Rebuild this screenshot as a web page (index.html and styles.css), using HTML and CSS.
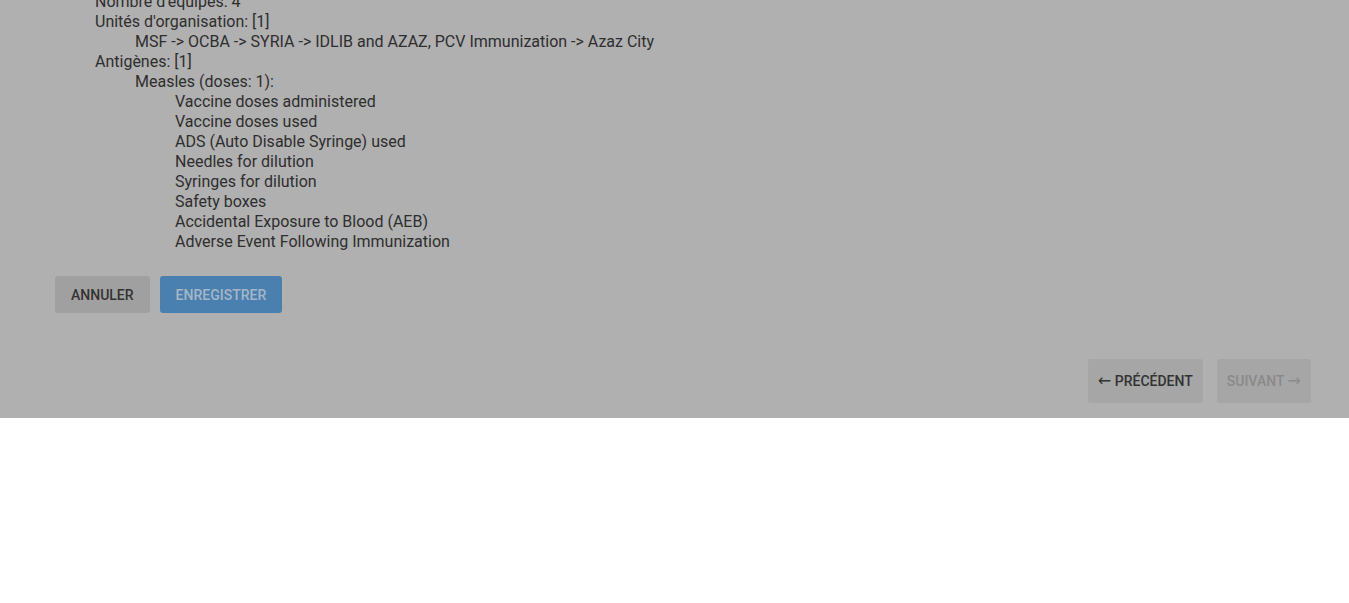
FILE: index.html
```html
<!DOCTYPE html>
<html lang="fr">
<head>
<meta charset="utf-8">
<link rel="stylesheet" href="styles.css">
</head>
<body>
<div class="screen">
  <div class="summary">
    <div class="line l1">Nombre d'équipes: 4</div>
    <div class="line l1">Unités d'organisation: [1]</div>
    <div class="line l2">MSF -&gt; OCBA -&gt; SYRIA -&gt; IDLIB and AZAZ, PCV Immunization -&gt; Azaz City</div>
    <div class="line l1">Antigènes: [1]</div>
    <div class="line l2">Measles (doses: 1):</div>
    <div class="line l3">Vaccine doses administered</div>
    <div class="line l3">Vaccine doses used</div>
    <div class="line l3">ADS (Auto Disable Syringe) used</div>
    <div class="line l3">Needles for dilution</div>
    <div class="line l3">Syringes for dilution</div>
    <div class="line l3">Safety boxes</div>
    <div class="line l3">Accidental Exposure to Blood (AEB)</div>
    <div class="line l3">Adverse Event Following Immunization</div>
  </div>
  <div class="actions">
    <button class="btn btn-cancel">Annuler</button>
    <button class="btn btn-save">Enregistrer</button>
  </div>
  <div class="nav">
    <button class="navbtn prev"><span class="arrow">&larr;</span> Précédent</button>
    <button class="navbtn next">Suivant <span class="arrow">&rarr;</span></button>
  </div>
</div>
</body>
</html>
```
FILE: styles.css
```css
html, body {
  margin: 0;
  padding: 0;
  background: #ffffff;
}
body {
  font-family: Roboto, "Liberation Sans", sans-serif;
}
.screen {
  background: #b0b0b0;
  height: 418px;
  overflow: hidden;
  display: flex;
  flex-direction: column;
}
.summary {
  margin-top: -8px;
  color: #2e2e2e;
  font-size: 16px;
  line-height: 20px;
}
.line { white-space: nowrap; }
.l1 { padding-left: 95px; }
.l2 { padding-left: 135px; }
.l3 { padding-left: 175px; }
.actions {
  display: flex;
  gap: 10px;
  padding-left: 55px;
  margin-top: 24px;
}
.btn {
  font-family: Roboto, "Liberation Sans", sans-serif;
  font-size: 14px;
  font-weight: 500;
  text-transform: uppercase;
  border: none;
  border-radius: 3px;
  height: 37px;
  padding: 0 16px;
  cursor: pointer;
}
.btn-cancel {
  background: #a0a0a0;
  color: #333333;
}
.btn-save {
  background: #4980b0;
  color: #a6b6c6;
}
.nav {
  display: flex;
  justify-content: flex-end;
  gap: 14px;
  padding-right: 38px;
  margin-top: 46px;
}
.navbtn {
  font-family: Roboto, "Liberation Sans", sans-serif;
  font-size: 14px;
  font-weight: 500;
  text-transform: uppercase;
  border: none;
  border-radius: 3px;
  height: 44px;
  padding: 0 10px;
  background: #a6a6a6;
  white-space: nowrap;
}
.arrow {
  font-family: "DejaVu Sans", sans-serif;
  font-weight: 400;
  font-size: 16px;
  line-height: 1;
}
.prev { color: #333333; }
.next { color: #8a8a8a; }
```
